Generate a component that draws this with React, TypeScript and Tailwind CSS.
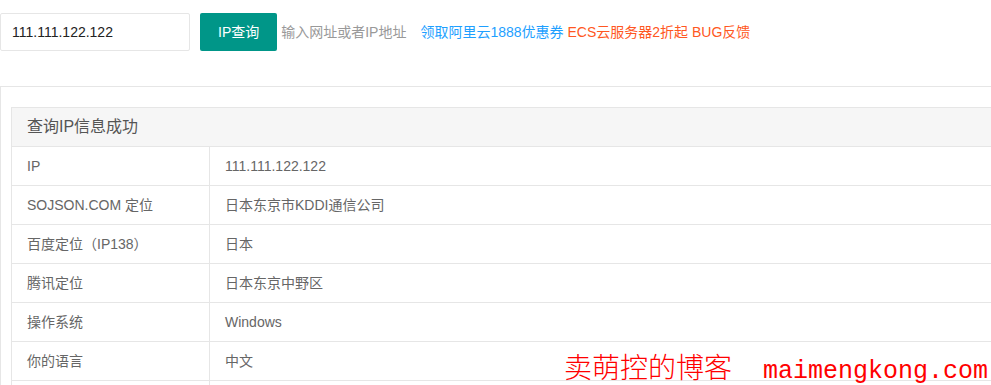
const rows: [string, string][] = [
  ["IP", "111.111.122.122"],
  ["SOJSON.COM 定位", "日本东京市KDDI通信公司"],
  ["百度定位（IP138）", "日本"],
  ["腾讯定位", "日本东京中野区"],
  ["操作系统", "Windows"],
  ["你的语言", "中文"],
  ["", ""],
];

export default function App() {
  return (
    <div className="relative h-[385px] w-[991px] overflow-hidden bg-white font-['Liberation_Sans','Noto_Sans_CJK_SC',sans-serif] text-sm text-[#666]">
      <div className="flex items-center pt-[13px]">
        <input
          className="h-[38px] w-[190px] rounded-[2px] border border-[#e6e6e6] px-[11px] text-sm text-[#222] outline-none"
          defaultValue="111.111.122.122"
        />
        <button
          type="button"
          className="ml-[10px] h-[38px] rounded-[2px] bg-[#009688] px-[18px] text-sm text-white"
        >
          IP查询
        </button>
        <span className="ml-1 text-[#999]">输入网址或者IP地址</span>
        <span className="ml-[14px] whitespace-pre">
          <a className="text-[#1E9FFF]">领取阿里云1888优惠券</a>{" "}
          <a className="text-[#FF5722]">ECS云服务器2折起</a>{" "}
          <a className="text-[#FF5722]">BUG反馈</a>
        </span>
      </div>

      <div className="mt-[35px] w-[1200px] border-l border-t border-[#e6e6e6] pl-[10px] pt-5">
        <table className="w-[1150px] border-collapse">
          <thead>
            <tr className="bg-[#f6f6f6]">
              <th
                colSpan={2}
                className="border border-[#e6e6e6] px-[15px] py-[9px] text-left text-base font-normal leading-5 text-[#555]"
              >
                查询IP信息成功
              </th>
            </tr>
          </thead>
          <tbody>
            {rows.map(([k, v], i) => (
              <tr key={i} className="h-[39px]">
                <td className="w-[198px] border border-[#e6e6e6] px-[15px] py-[9px] leading-5">{k}</td>
                <td className="border border-[#e6e6e6] px-[15px] py-[9px] leading-5">{v}</td>
              </tr>
            ))}
          </tbody>
        </table>
      </div>

      <div className="absolute left-[564px] top-[352px] flex h-[28px] items-baseline leading-none text-[#ff0000]">
        <span className="font-['Noto_Sans_CJK_SC',serif] text-[28px] font-light leading-none">卖萌控的博客</span>
        <span className="ml-[31px] font-['Liberation_Mono',monospace] text-[25px] leading-none">maimengkong.com</span>
      </div>
    </div>
  );
}
